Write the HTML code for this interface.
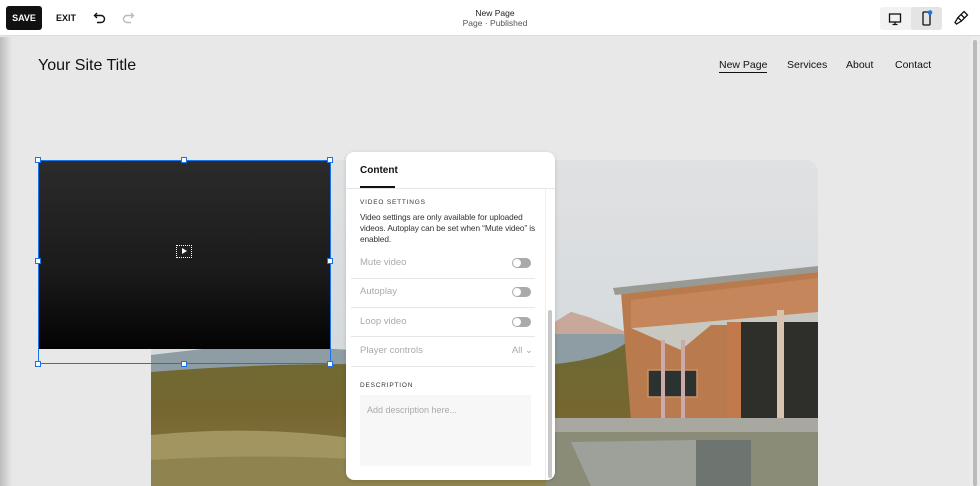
<!DOCTYPE html>
<html><head><meta charset="utf-8"><style>
*{margin:0;padding:0;box-sizing:border-box}
body{width:980px;height:486px;overflow:hidden;background:#e8e8e8;font-family:"Liberation Sans",sans-serif;position:relative}
.top{position:absolute;left:0;top:0;width:980px;height:36px;background:#fff;border-bottom:1px solid #ddd}
.save{position:absolute;left:6px;top:6px;width:36px;height:24px;background:#111;border-radius:3px;color:#fff;font-size:9px;font-weight:bold;text-align:center;line-height:24px}
.exit{position:absolute;left:56px;top:13px;font-size:9px;font-weight:bold;color:#111}
.ttl{position:absolute;left:0;width:990px;text-align:center;font-size:8.5px;color:#222}
.dev{position:absolute;left:880px;top:7px;width:62px;height:23px;background:#f2f2f2;border-radius:3px}
.sh{position:absolute;left:0;top:37px;width:12px;height:449px;background:linear-gradient(90deg,#bdbdbd,#e8e8e8)}
.site{position:absolute;left:38px;top:57px;font-size:16px;color:#111}
.nav{position:absolute;top:59px;font-size:10.5px;color:#111}
.h{position:absolute;width:6px;height:6px;background:#fff;border:1px solid #1a73e8}
.panel{position:absolute;left:346px;top:152px;width:209px;height:328px;background:#fff;border-radius:8px;box-shadow:0 1px 4px rgba(0,0,0,.15);overflow:hidden}
.lbl{position:absolute;left:14px;font-size:6.5px;letter-spacing:.8px;color:#333}
.row{position:absolute;left:14px;width:175px;font-size:9.5px;color:#aaa}
.tg{position:absolute;right:4px;top:1px;width:19px;height:10px;border-radius:5px;background:#aaa}
.tg:after{content:"";position:absolute;left:1px;top:1px;width:8px;height:8px;border-radius:50%;background:#fff}
.ln{position:absolute;left:5px;width:184px;height:1px;background:#e6e6e6}
</style></head><body>
<div class="top">
<div class="save">SAVE</div><div class="exit">EXIT</div>
<svg style="position:absolute;left:93px;top:11px" width="14" height="14" viewBox="0 0 14 14" fill="none" stroke="#111" stroke-width="1.4"><path d="M4 2L1.5 4.5 4 7M1.5 4.5H8a3.5 3.5 0 010 7H4"/></svg>
<svg style="position:absolute;left:121px;top:11px" width="14" height="14" viewBox="0 0 14 14" fill="none" stroke="#bbb" stroke-width="1.4"><path d="M10 2l2.5 2.5L10 7m2.5-2.5H6a3.5 3.5 0 000 7h4"/></svg>
<div class="ttl" style="top:8px">New Page</div>
<div class="ttl" style="top:18px;color:#555">Page · Published</div>
<div class="dev"></div>
<svg style="position:absolute;left:888px;top:12px" width="14" height="14" viewBox="0 0 14 14" fill="none" stroke="#111" stroke-width="1.3"><rect x="1.5" y="2" width="11" height="8"/><path d="M7 10v2.5M4.5 12.5h5"/></svg>
<div style="position:absolute;left:911px;top:7px;width:31px;height:23px;background:#e4e4e4;border-radius:3px"></div>
<svg style="position:absolute;left:920px;top:10px" width="14" height="17" viewBox="0 0 14 17" fill="none" stroke="#111" stroke-width="1.3"><rect x="3" y="2" width="7" height="13" rx="1"/><circle cx="10" cy="2.5" r="2.3" fill="#1a73e8" stroke="none"/></svg>
<svg style="position:absolute;left:953px;top:10px" width="16" height="16" viewBox="0 0 16 16" fill="none" stroke="#111" stroke-width="1.3"><path d="M11 1.5l3.5 3.5-6 6-3.5-3.5zM5 7.5l-3 5 1.5 1.5 5-3M8 4.5l3.5 3.5"/></svg>
</div>
<div class="sh"></div>
<div style="position:absolute;left:970px;top:37px;width:10px;height:449px;background:#ececec"></div>
<div style="position:absolute;left:973px;top:40px;width:4px;height:446px;background:#bbb;border-radius:2px"></div>
<div class="site">Your Site Title</div>
<div class="nav" style="left:719px;border-bottom:1px solid #111;padding-bottom:1px">New Page</div>
<div class="nav" style="left:787px">Services</div>
<div class="nav" style="left:846px">About</div>
<div class="nav" style="left:895px">Contact</div>
<svg style="position:absolute;left:151px;top:160px" width="667" height="326" viewBox="0 0 667 326">
<defs><clipPath id="c"><path d="M0 0H655a12 12 0 0112 12V326H0z"/></clipPath>
<linearGradient id="sky" x1="0" y1="0" x2="0" y2="1"><stop offset="0" stop-color="#e0e1e2"/><stop offset="1" stop-color="#cdd5d9"/></linearGradient>
<linearGradient id="gr" x1="0" y1="0" x2="0" y2="1"><stop offset="0" stop-color="#6d6a36"/><stop offset=".5" stop-color="#76662f"/><stop offset="1" stop-color="#8a7848"/></linearGradient></defs>
<g clip-path="url(#c)">
<rect width="667" height="326" fill="url(#sky)"/>
<path d="M0 195L60 188 120 185 200 190 260 182 330 178 380 170 404 162 420 152 440 158 460 168 480 178V220H0z" fill="#8e9ca3"/>
<path d="M404 162L420 152 440 158 460 166 480 174H400z" fill="#c8a898"/>
<path d="M0 212Q150 200 300 206T480 178L490 178V326H0z" fill="url(#gr)"/>
<path d="M0 275Q100 265 200 278T420 268V326H0z" fill="#a3955f"/>
<path d="M0 300Q120 292 250 302T420 295V326H0z" fill="#8f8450"/>
<path d="M470 132L667 112V262H480z" fill="#b97a4d"/>
<path d="M480 140L667 118V152L480 168z" fill="#c4865a"/>
<path d="M462 128L667 106V112L464 135z" fill="#9a9a94"/>
<path d="M482 168L667 152V165H560L530 178z" fill="#c9c8c0"/>
<path d="M480 168L530 190 560 165" fill="#c9c8c0"/>
<rect x="590" y="162" width="77" height="103" fill="#2e2e2a"/>
<rect x="576" y="162" width="14" height="103" fill="#c27a4c"/>
<rect x="626" y="150" width="7" height="115" fill="#d8c4ae"/>
<rect x="497" y="210" width="49" height="27" fill="#2b3230" stroke="#d09060" stroke-width="1.5"/>
<rect x="510" y="180" width="4" height="85" fill="#caa"/>
<rect x="530" y="180" width="4" height="85" fill="#caa"/>
<path d="M395 258H667V272H395z" fill="#a9a8a0"/>
<path d="M395 272H667V326H395z" fill="#8a8c78"/>
<path d="M420 282L545 280V326H440z" fill="#9ea09a"/>
<path d="M545 280H600V326H545z" fill="#6e7470"/>
</g></svg>
<div style="position:absolute;left:39px;top:161px;width:291px;height:188px;background:linear-gradient(#2b2b2b,#1a1a1a 60%,#030303)"></div>
<div style="position:absolute;left:39px;top:349px;width:112px;height:15px;background:#e8e8e8"></div>
<div style="position:absolute;left:38px;top:160px;width:293px;height:204px;border:1px solid #1a73e8"></div>
<div style="position:absolute;left:176px;top:245px;width:16px;height:13px;border:1.5px dotted #fff"></div>
<div style="position:absolute;left:182px;top:248px;width:0;height:0;border-left:5px solid #fff;border-top:3.5px solid transparent;border-bottom:3.5px solid transparent"></div>
<div class="h" style="left:35px;top:157px"></div><div class="h" style="left:181px;top:157px"></div><div class="h" style="left:327px;top:157px"></div>
<div class="h" style="left:35px;top:258px"></div><div class="h" style="left:327px;top:258px"></div>
<div class="h" style="left:35px;top:361px"></div><div class="h" style="left:181px;top:361px"></div><div class="h" style="left:327px;top:361px"></div>
<div class="panel">
<div style="position:absolute;left:14px;top:13px;font-size:10px;font-weight:bold;color:#111">Content</div>
<div style="position:absolute;left:14px;top:34px;width:35px;height:2px;background:#111"></div>
<div style="position:absolute;left:0;top:36px;width:209px;height:1px;background:#e6e6e6"></div>
<div style="position:absolute;left:199px;top:37px;width:1px;height:291px;background:#eee"></div>
<div style="position:absolute;left:202px;top:158px;width:4px;height:168px;background:#c8c8c8;border-radius:2px"></div>
<div class="lbl" style="top:47px">VIDEO SETTINGS</div>
<div style="position:absolute;left:14px;top:60px;width:176px;font-size:8.3px;line-height:11px;color:#333;letter-spacing:-.1px">Video settings are only available for uploaded videos. Autoplay can be set when “Mute video” is enabled.</div>
<div class="row" style="top:105px">Mute video<div class="tg"></div></div>
<div class="ln" style="top:126px"></div>
<div class="row" style="top:134px">Autoplay<div class="tg"></div></div>
<div class="ln" style="top:155px"></div>
<div class="row" style="top:164px">Loop video<div class="tg"></div></div>
<div class="ln" style="top:184px"></div>
<div class="row" style="top:193px">Player controls<span style="position:absolute;right:2px">All &#8964;</span></div>
<div class="ln" style="top:214px"></div>
<div class="lbl" style="top:230px">DESCRIPTION</div>
<div style="position:absolute;left:14px;top:243px;width:171px;height:71px;background:#f7f7f7;font-size:9px;color:#aaa;padding:10px 7px">Add description here...</div>
</div>
</body></html>
